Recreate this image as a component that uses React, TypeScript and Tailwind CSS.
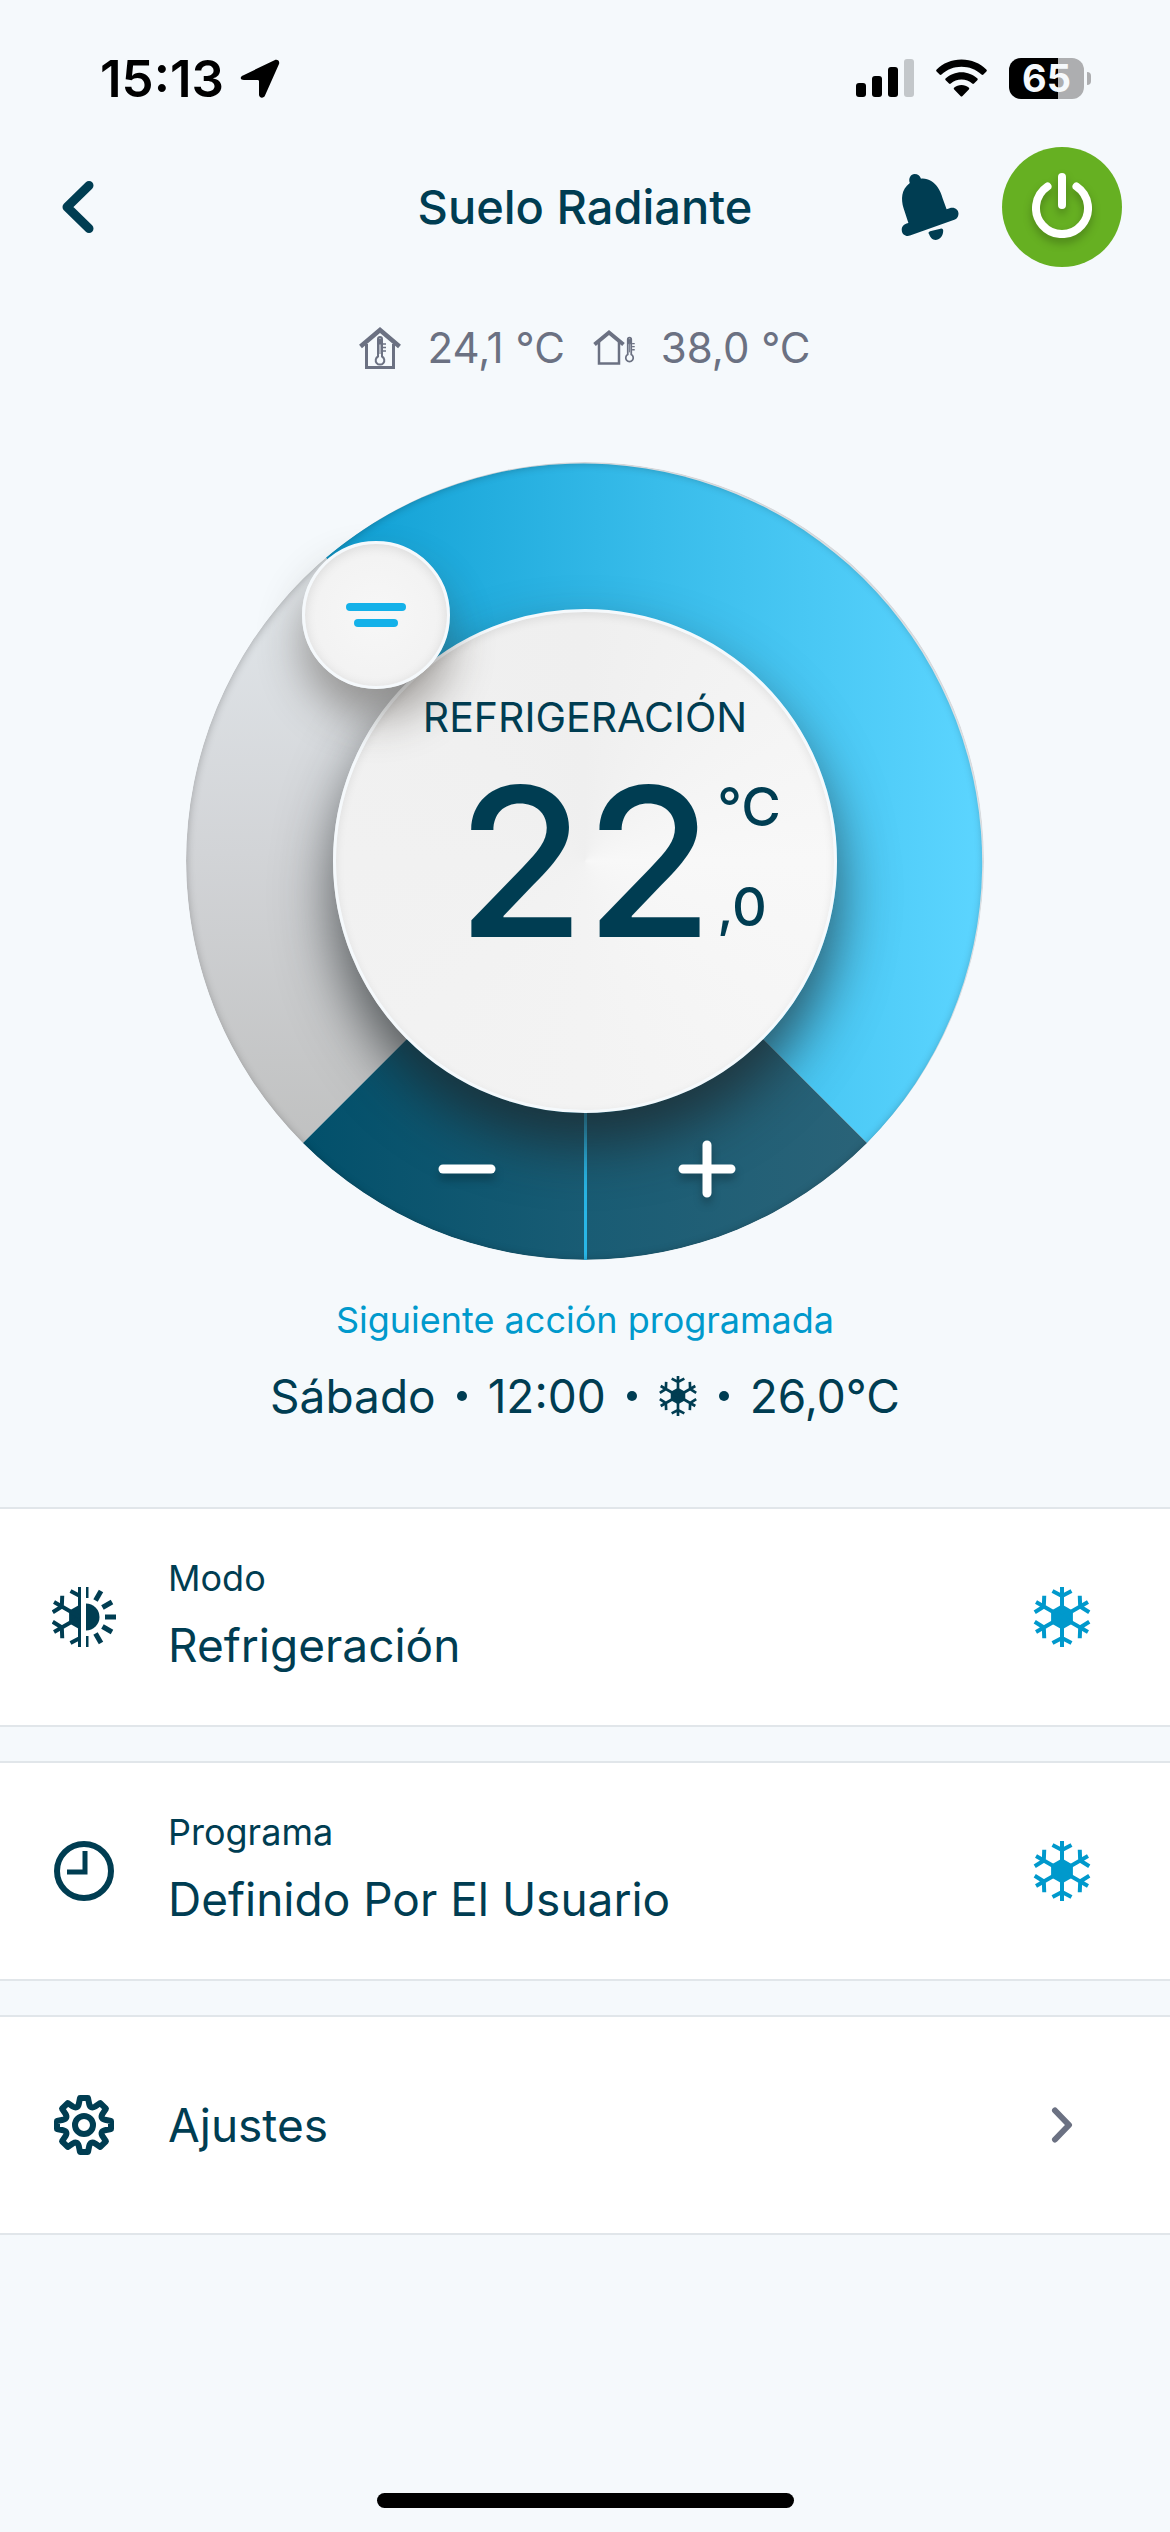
import React, { useState } from "react";

type IconProps = { className?: string };

const TURNS = [0, 60, 120, 180, 240, 300];

function SnowflakeShape() {
  return (
    <>
      <path d="M0 -12.5 10.9 -6.2V6.2L0 12.5 -10.9 6.2V-6.2Z" fill="currentColor" />
      {TURNS.map((a) => (
        <path
          key={a}
          d="M0 0V-30M-9.5 -26 0 -21 9.5 -26"
          transform={`rotate(${a})`}
          fill="none"
          stroke="currentColor"
          strokeWidth="4"
        />
      ))}
    </>
  );
}

function Snowflake({ className }: IconProps) {
  return (
    <svg viewBox="-30 -30 60 60" className={className} aria-hidden="true">
      <SnowflakeShape />
    </svg>
  );
}

function ModeIcon({ className }: IconProps) {
  return (
    <svg viewBox="-28 -30 64 60" className={className} aria-hidden="true">
      <defs>
        <clipPath id="cold-half">
          <rect x="-30" y="-30" width="31" height="60" />
        </clipPath>
        <clipPath id="warm-half">
          <rect x="0" y="-30" width="32" height="60" />
        </clipPath>
      </defs>
      <g clipPath="url(#cold-half)">
        <SnowflakeShape />
      </g>
      <g transform="translate(6)" clipPath="url(#warm-half)">
        <circle r="13.5" fill="currentColor" />
        {[0, 30, 60, 90, 120, 150, 180].map((a) => (
          <path key={a} d="M0 -19V-30" transform={`rotate(${a})`} stroke="currentColor" strokeWidth="5" />
        ))}
      </g>
    </svg>
  );
}

function ClockIcon({ className }: IconProps) {
  return (
    <svg viewBox="0 0 60 60" className={className} fill="none" stroke="currentColor" aria-hidden="true">
      <circle cx="30" cy="30" r="27" strokeWidth="6" />
      <path d="M31 10V31H13" strokeWidth="5" />
    </svg>
  );
}

const turn = (x: number, y: number, deg: number) => {
  const a = (deg * Math.PI) / 180;
  const px = x * Math.cos(a) - y * Math.sin(a);
  const py = x * Math.sin(a) + y * Math.cos(a);
  return `${px.toFixed(2)} ${py.toFixed(2)}`;
};

const gearPath =
  [0, 45, 90, 135, 180, 225, 270, 315]
    .map(
      (d) =>
        `${d === 0 ? "M" : "L"}${turn(-4, -27, d)}L${turn(4, -27, d)}L${turn(5.2, -21, d)}Q${turn(0, -17, d + 22.5)} ${turn(-5.2, -21, d + 45)}`,
    )
    .join("") + "Z";

function GearIcon({ className }: IconProps) {
  return (
    <svg viewBox="-30 -30 60 60" className={className} fill="none" stroke="currentColor" strokeWidth="6" aria-hidden="true">
      <path d={gearPath} strokeLinejoin="round" />
      <circle r="9" />
    </svg>
  );
}

function BellIcon({ className }: IconProps) {
  return (
    <svg viewBox="0 0 58 66" className={className} fill="currentColor" aria-hidden="true">
      <path d="M8.8 9C7 4 10 0 13.5 0C17 0 19 2 20 4.700C27 4 33 8 36.500 13C39 16.500 40.500 20.500 41.500 24L45.600 35.200L50 33.800C54 33 57.500 36 57.500 39.500C57.500 42 56.500 44.500 54 45.600L9 61.600C5 63 1 60.500 0.800 56.500C0.500 53 2 50.500 7.400 49L2.500 34C0 25 0 16 8.800 9Z" />
      <path d="M28 60C27 59 27.500 58 29 57.200L39.500 54.700C41.500 54.300 42.300 55.500 42.200 57C42 62.500 38.500 66 34.500 66C31.500 66 29 63 28 60Z" />
    </svg>
  );
}

function PowerIcon({ className }: IconProps) {
  return (
    <svg
      viewBox="0 0 60 66"
      className={className}
      fill="none"
      stroke="currentColor"
      strokeWidth="8"
      strokeLinecap="round"
      aria-hidden="true"
    >
      <path d="M30 5V33M15.500 14.500A26 26 0 1 0 44.500 14.500" />
    </svg>
  );
}

function Thermometer() {
  return (
    <>
      <path d="M-2 -14V3.500A4.300 4.300 0 1 0 2 3.500V-14A2 2 0 0 0 -2 -14Z" fill="none" stroke="currentColor" strokeWidth="2" />
      <path d="M-2 -14H2V-9H-2ZM0 -9V1" fill="currentColor" stroke="currentColor" strokeWidth="1" />
      <path d="M3 -9H6M3 -5.500H6M3 -2H6" stroke="currentColor" strokeWidth="1.500" />
    </>
  );
}

function IndoorIcon({ className }: IconProps) {
  return (
    <svg viewBox="0 0 42 42" className={className} fill="none" stroke="currentColor" aria-hidden="true">
      <path d="M1.500 19.500 21 3 40.500 19.500" strokeWidth="4.500" />
      <path d="M7.500 17V40.500H34.500V17" strokeWidth="3" />
      <g transform="translate(21 26)">
        <Thermometer />
      </g>
    </svg>
  );
}

function OutdoorIcon({ className }: IconProps) {
  return (
    <svg viewBox="0 0 42 42" className={className} fill="none" stroke="currentColor" aria-hidden="true">
      <path d="M1.500 17.500 16 5.500 30.500 17.500" strokeWidth="4" />
      <path d="M6 15V36.500H26V15" strokeWidth="2.500" />
      <g transform="translate(36.500 24.500) scale(0.87)">
        <Thermometer />
      </g>
    </svg>
  );
}

function StatusBar() {
  return (
    <div className="flex h-[147px] items-start justify-between pt-12 pr-[79px] pl-[100px] text-black">
      <div className="flex h-[60px] items-center gap-4">
        <span className="text-[51px] leading-none font-semibold">15:13</span>
        <svg viewBox="0 0 40 39" className="h-[39px] w-10" aria-hidden="true">
          <path
            d="M3.500 16.200 34.500 1.200C37.500 0 40 2 39 5L25 36.500C24 39.500 19 39.500 19 35.500V22.500C19 21.500 18.500 21 17.500 21H4C0 21 -0.500 17.800 3.500 16.200Z"
            fill="currentColor"
          />
        </svg>
      </div>
      <div className="flex h-[60px] items-center gap-[22px]">
        <svg viewBox="0 0 58 38" className="h-[38px] w-[58px]" aria-hidden="true">
          <rect x="0" y="24" width="10" height="14" rx="3" />
          <rect x="16" y="17" width="10" height="21" rx="3" />
          <rect x="32" y="8" width="10" height="30" rx="3" />
          <rect x="48" y="0" width="10" height="38" rx="3" fill="#c3c7ca" />
        </svg>
        <svg viewBox="0 0 51 38" className="h-[38px] w-[51px]" aria-hidden="true">
          <path d="M25.500 0.500C35.500 0.500 44 4.300 50.300 10.400C51 11.100 51 11.800 50.400 12.500L47.400 15.500C46.800 16.100 46.100 16.100 45.500 15.500C40 10.500 33 7.800 25.500 7.800C18 7.800 11 10.500 5.500 15.500C4.900 16.100 4.200 16.100 3.600 15.500L0.600 12.500C0 11.800 0 11.100 0.700 10.400C7 4.300 15.500 0.500 25.500 0.500Z" />
          <path d="M25.500 13.200C31.500 13.200 37 15.500 41.200 19.300C41.900 20 41.900 20.700 41.300 21.300L38 24.500C37.400 25.100 36.800 25.100 36.200 24.500C33.300 22 29.600 20.500 25.500 20.500C21.400 20.500 17.700 22 14.800 24.500C14.200 25.100 13.600 25.100 13 24.500L9.700 21.300C9.100 20.700 9.100 20 9.800 19.300C14 15.500 19.500 13.200 25.500 13.200Z" />
          <path d="M25.500 26C28.300 26 30.800 26.900 32.700 28.500C33.400 29.200 33.400 29.800 32.800 30.400L26.500 37C25.800 37.700 25.200 37.700 24.500 37L18.200 30.400C17.600 29.800 17.600 29.200 18.300 28.500C20.200 26.900 22.700 26 25.500 26Z" />
        </svg>
        <div className="flex items-center gap-[3px]">
          <div className="flex h-[41px] w-[75px] items-center justify-center rounded-[12px] bg-[linear-gradient(to_right,#000_65%,#adaeb0_65%)] text-[38px] leading-none font-bold text-[#f5f9fc]">
            65
          </div>
          <div className="h-[13px] w-1 rounded-r-full bg-[#adaeb0]" />
        </div>
      </div>
    </div>
  );
}

function Header() {
  return (
    <header className="grid grid-cols-[1fr_auto_1fr] items-center px-12">
      <button type="button" aria-label="Volver" className="flex size-[60px] items-center justify-center">
        <svg viewBox="0 0 32 52" className="h-[52px] w-8" fill="none" aria-hidden="true">
          <path d="M27 4.500 5 26 27 47.500" stroke="currentColor" strokeWidth="9" strokeLinecap="round" strokeLinejoin="round" />
        </svg>
      </button>
      <h1 className="text-[47px] leading-[60px] font-medium">Suelo Radiante</h1>
      <div className="flex items-center justify-end gap-[43px]">
        <button type="button" aria-label="Notificaciones">
          <BellIcon className="h-[66px] w-[58px]" />
        </button>
        <button
          type="button"
          aria-label="Encendido"
          className="flex size-[120px] items-center justify-center rounded-full bg-[#66b022] text-white"
        >
          <PowerIcon className="-mt-1 h-[66px] w-[60px] drop-shadow-[0_5px_4px_rgba(0,0,0,0.25)]" />
        </button>
      </div>
    </header>
  );
}

function Dial() {
  const [tenths, setTenths] = useState(220);
  return (
    <div className="relative mx-auto size-[798px]">
      <div className="absolute inset-0 overflow-hidden rounded-full">
        <svg viewBox="-399 -399 798 798" className="size-full" aria-hidden="true">
          <defs>
            <linearGradient id="rest" gradientUnits="userSpaceOnUse" x1="0" y1="-300" x2="0" y2="282">
              <stop offset="0" stopColor="#e2e7eb" />
              <stop offset="0.5" stopColor="#d2d4d7" />
              <stop offset="1" stopColor="#c0c1c1" />
            </linearGradient>
            <linearGradient id="cool" gradientUnits="userSpaceOnUse" x1="-260" y1="0" x2="399" y2="0">
              <stop offset="0" stopColor="#0f9fd3" />
              <stop offset="0.5" stopColor="#38bcea" />
              <stop offset="1" stopColor="#5cd5ff" />
            </linearGradient>
            <linearGradient id="keys" gradientUnits="userSpaceOnUse" x1="-282" y1="0" x2="282" y2="0">
              <stop offset="0" stopColor="#02506b" />
              <stop offset="0.5" stopColor="#195c74" />
              <stop offset="1" stopColor="#2a6378" />
            </linearGradient>
          </defs>
          <path d="M0 0-282 282A399 399 0 0 1-259-303.500Z" fill="url(#rest)" />
          <path d="M0 0-259-303.500A399 399 0 0 1 282 282Z" fill="url(#cool)" />
          <path d="M0 0 282 282A399 399 0 0 1-282 282Z" fill="url(#keys)" />
          <path d="M.5 0V399" stroke="#29b6e6" strokeWidth="3" />
        </svg>
        <div className="absolute inset-[147px] rounded-full shadow-[0_32px_56px_rgba(30,36,38,0.7)]" />
        <div className="absolute inset-0 rounded-full shadow-[inset_0_1px_8px_rgba(0,0,0,0.26)]" />
      </div>

      <div className="absolute inset-[147px] flex flex-col items-center rounded-full border-[3px] border-[#f5f9fc] bg-[conic-gradient(#efefef,#f8f8f8_90deg,#f3f3f3_180deg,#f1f1f1_270deg,#efefef)] pt-[77px] shadow-[inset_0_3px_10px_rgba(0,0,0,0.08)]">
        <p className="text-[41px] leading-[56px]">REFRIGERACIÓN</p>
        <div className="grid w-full grid-cols-[1fr_auto_1fr] pt-10">
          <span />
          <span className="text-[208px] leading-[152px] font-medium">{Math.floor(tenths / 10)}</span>
          <span className="flex flex-col justify-between pb-2 pl-1 text-[54px] leading-[44px] font-medium">
            <span>°C</span>
            <span>,{tenths % 10}</span>
          </span>
        </div>
      </div>

      <div className="absolute top-[79px] left-[116px] flex size-[148px] flex-col items-center justify-center gap-2 rounded-full border-[3px] border-[#f5f9fc] bg-[radial-gradient(circle,#f7f7f7,#f0f0f0)] shadow-[0_28px_44px_rgba(55,48,40,0.42),inset_0_2px_12px_rgba(0,0,0,0.1)]">
        <span className="h-2 w-[60px] rounded-full bg-[#14b1e9]" />
        <span className="h-2 w-11 rounded-full bg-[#14b1e9]" />
        <input
          type="range"
          aria-label="Temperatura"
          min={70}
          max={350}
          step={5}
          value={tenths}
          onChange={(e) => setTenths(Number(e.target.value))}
          className="absolute inset-0 cursor-pointer opacity-0"
        />
      </div>

      <button
        type="button"
        aria-label="Bajar temperatura"
        onClick={() => setTenths(tenths - 5)}
        className="absolute top-[662px] left-[236px] flex size-[90px] items-center justify-center text-white"
      >
        <svg viewBox="0 0 58 58" className="size-[58px] drop-shadow-[0_6px_4px_rgba(0,0,0,0.25)]" aria-hidden="true">
          <path d="M5 29H53" stroke="currentColor" strokeWidth="9" strokeLinecap="round" />
        </svg>
      </button>
      <button
        type="button"
        aria-label="Subir temperatura"
        onClick={() => setTenths(tenths + 5)}
        className="absolute top-[662px] left-[476px] flex size-[90px] items-center justify-center text-white"
      >
        <svg viewBox="0 0 58 58" className="size-[58px] drop-shadow-[0_6px_4px_rgba(0,0,0,0.25)]" aria-hidden="true">
          <path d="M5 29H53M29 5V53" stroke="currentColor" strokeWidth="9" strokeLinecap="round" />
        </svg>
      </button>
    </div>
  );
}

const Dot = () => <span className="size-[10px] rounded-full bg-current" />;

type RowProps = { icon: React.ReactNode; caption?: string; title: string; trailing: React.ReactNode };

function Row({ icon, caption, title, trailing }: RowProps) {
  return (
    <button
      type="button"
      className="flex h-[220px] w-full items-center border-y-2 border-[#e1e6ea] bg-white pr-[78px] pl-[52px] text-left"
    >
      <span className="flex w-16 justify-center">{icon}</span>
      <span className="flex flex-1 flex-col gap-2 pl-[52px]">
        {caption && <span className="text-[36px] leading-[48px]">{caption}</span>}
        <span className="text-[46px] leading-[70px]">{title}</span>
      </span>
      <span className="flex w-[60px] justify-center">{trailing}</span>
    </button>
  );
}

export default function App() {
  return (
    <div className="flex min-h-screen flex-col bg-[#f5f9fc] font-['Inter',sans-serif] text-[#003d52]">
      <StatusBar />
      <Header />

      <div className="flex items-center justify-center gap-7 pt-[53px] text-[42px] leading-[56px] text-[#6b7182]">
        <span className="flex items-center gap-[26px]">
          <IndoorIcon className="size-[42px]" />
          24,1 °C
        </span>
        <span className="flex items-center gap-[26px]">
          <OutdoorIcon className="size-[42px]" />
          38,0 °C
        </span>
      </div>

      <main className="flex flex-col pt-[86px]">
        <Dial />

        <section className="flex flex-col items-center pt-9">
          <h2 className="text-[36px] leading-[48px] text-[#0099cc]">Siguiente acción programada</h2>
          <p className="flex items-center gap-[21px] pt-5 text-[46px] leading-[64px]">
            <span>Sábado</span>
            <Dot />
            <span>12:00</span>
            <Dot />
            <Snowflake className="size-10" />
            <Dot />
            <span>26,0°C</span>
          </p>
        </section>

        <section className="flex flex-col gap-[34px] pt-[79px]">
          <Row
            icon={<ModeIcon className="h-[60px] w-16" />}
            caption="Modo"
            title="Refrigeración"
            trailing={<Snowflake className="size-[60px] text-[#0099cc]" />}
          />
          <Row
            icon={<ClockIcon className="size-[60px]" />}
            caption="Programa"
            title="Definido Por El Usuario"
            trailing={<Snowflake className="size-[60px] text-[#0099cc]" />}
          />
          <Row
            icon={<GearIcon className="size-[60px]" />}
            title="Ajustes"
            trailing={
              <svg viewBox="0 0 22 36" className="h-9 w-[22px]" fill="none" aria-hidden="true">
                <path d="M4 3.500 18 18 4 32.500" stroke="#6b7182" strokeWidth="6" strokeLinecap="round" strokeLinejoin="round" />
              </svg>
            }
          />
        </section>
      </main>

      <div className="mt-auto flex justify-center pt-10 pb-6">
        <div className="h-[15px] w-[417px] rounded-full bg-black" />
      </div>
    </div>
  );
}
